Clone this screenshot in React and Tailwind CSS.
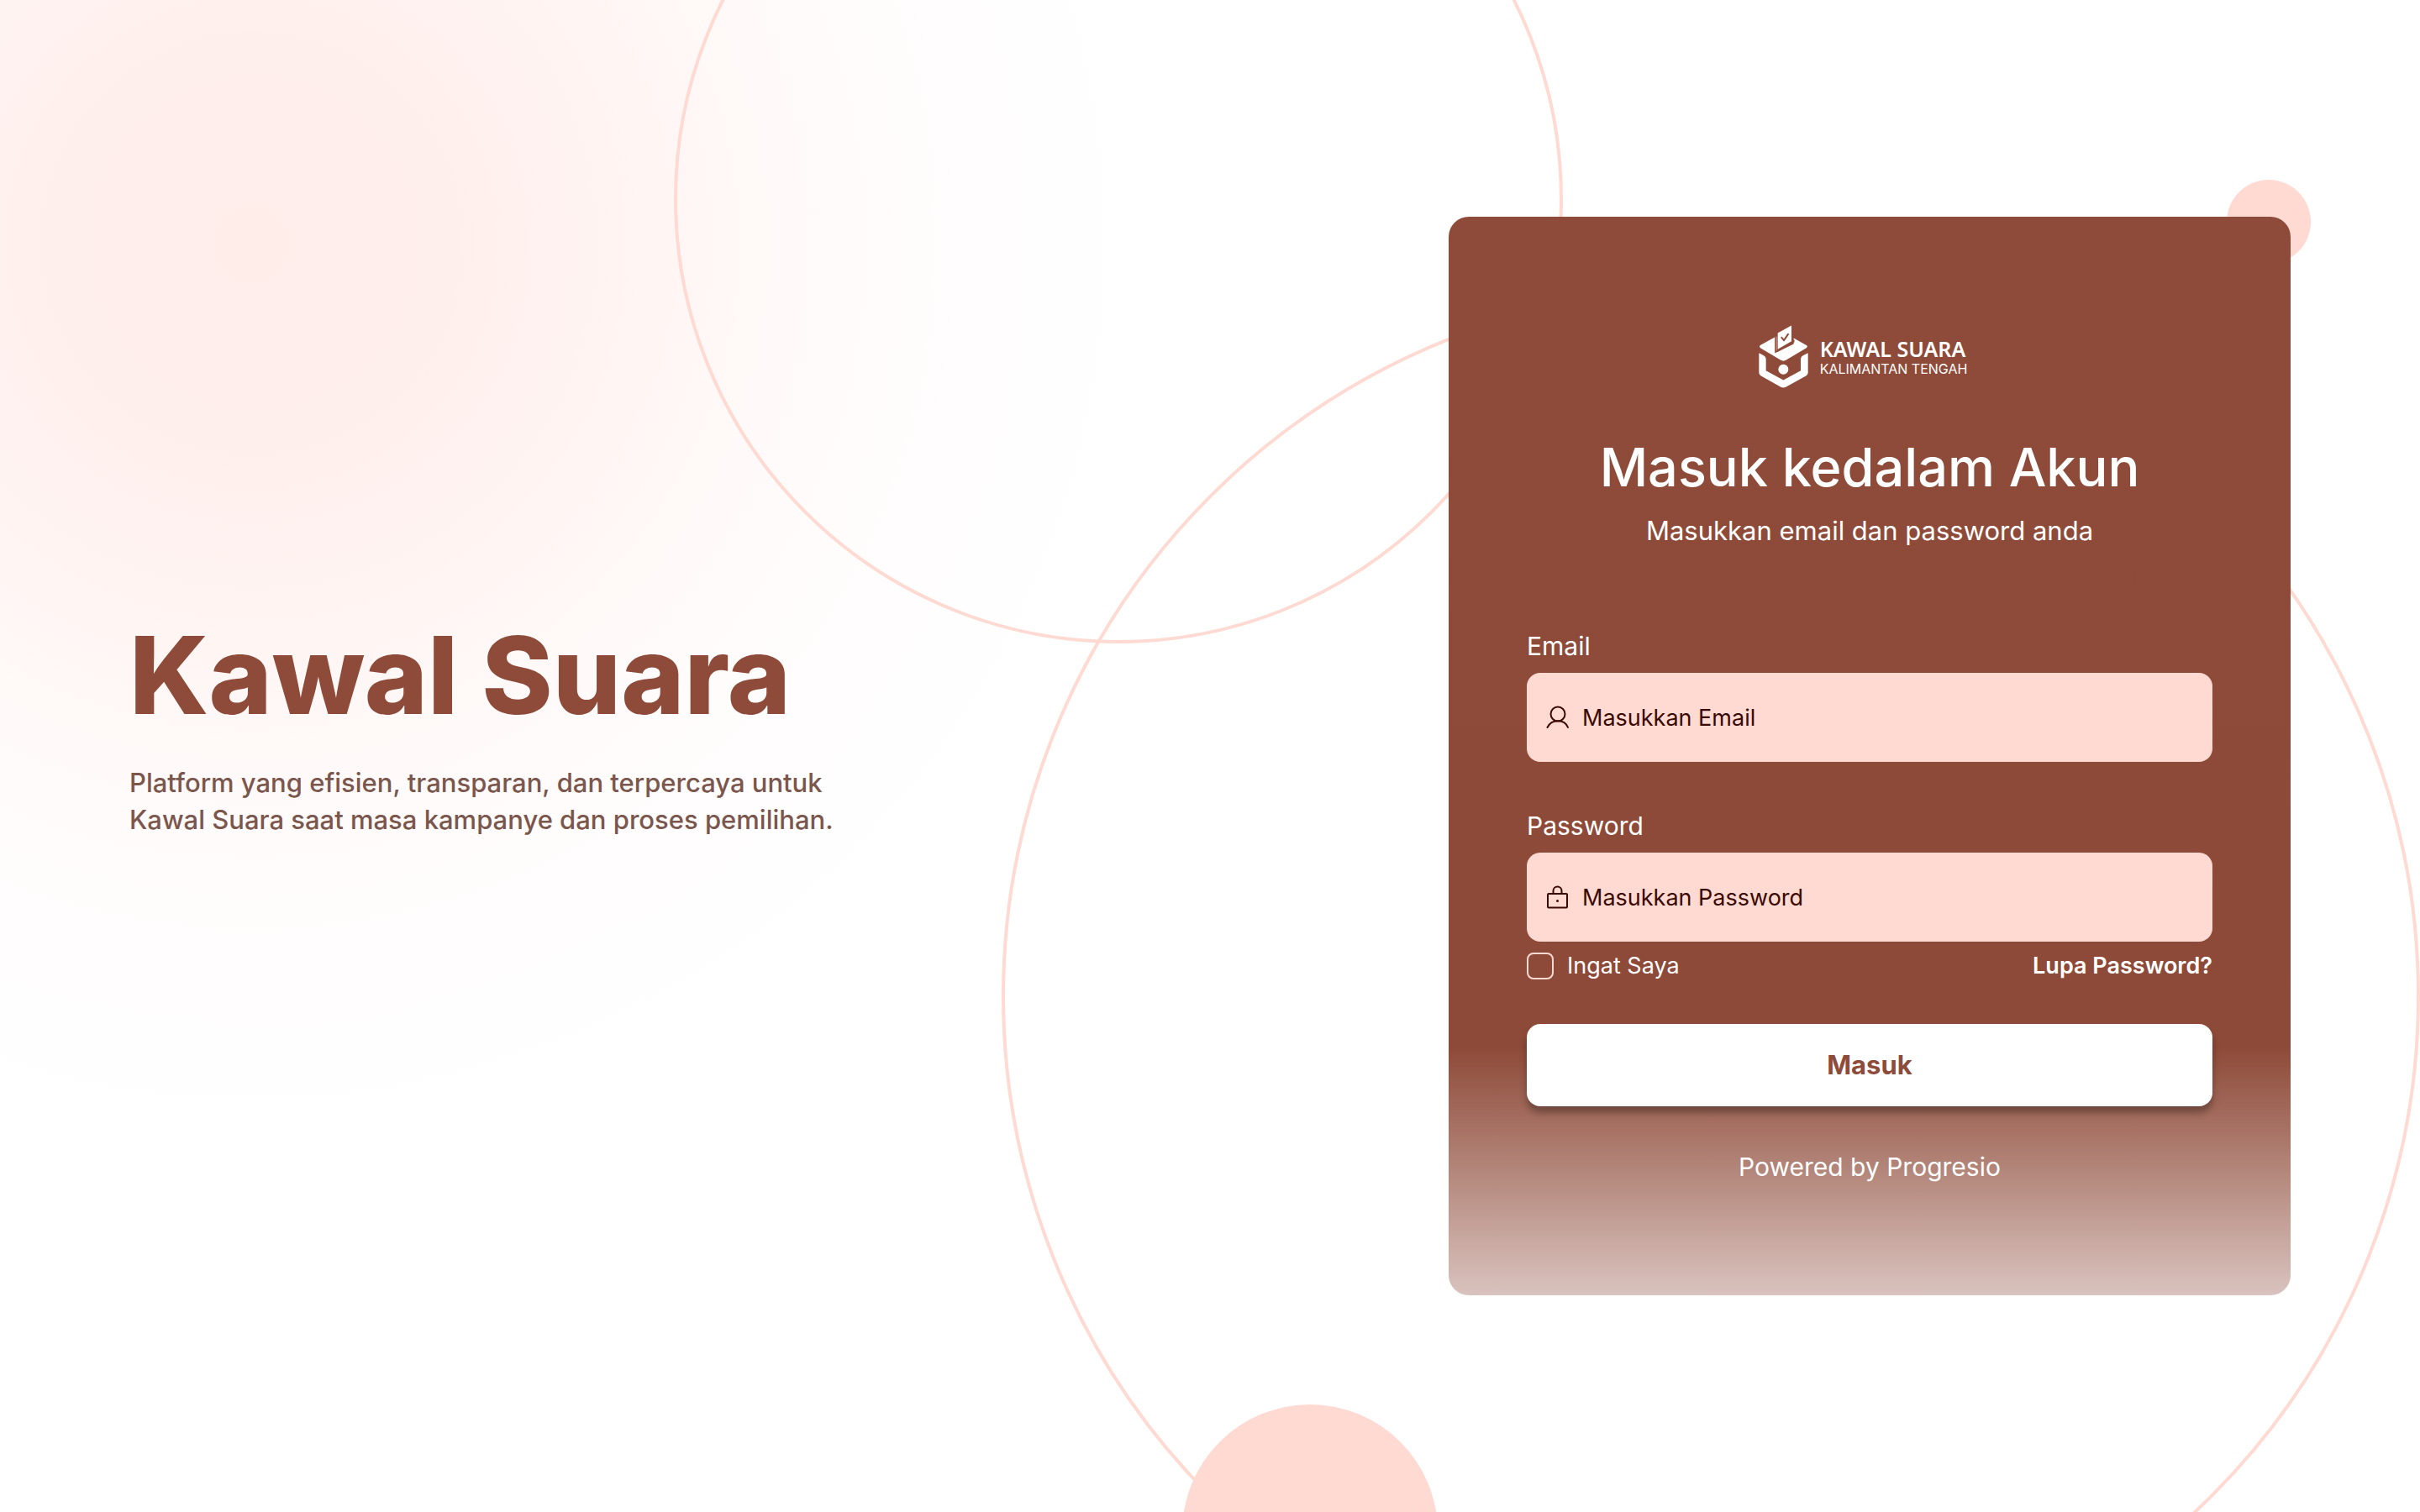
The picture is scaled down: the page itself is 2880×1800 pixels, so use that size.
function Logo() {
  return (
    <div className="flex items-center justify-center gap-[13px] pr-4">
      <svg viewBox="0 0 180 224" className="h-[75px] w-[60px]" aria-hidden="true">
        <path
          d="M61 41 7 71q-8 5 0 11l72 43q9 5 18 0l72-43q9-6 0-11l-44-25v21L64 97V41Z"
          fill="#fff"
        />
        <path d="M68 28 117 1V57L68 86Z" fill="#fff" />
        <path
          d="M60 40v56l7-4 58-33v-7"
          fill="none"
          stroke="#8e4b3a"
          strokeWidth="5"
        />
        <path d="m82 44 8 10 15-22" fill="none" stroke="#8e4b3a" strokeWidth="6" strokeLinecap="round" strokeLinejoin="round" />
        <path
          d="M1 99 18 108Q26 112 26 121V162L88 196 150 162V121Q150 112 158 108L176 99V170Q176 176 170 180L97 221Q88 225 79 221L7 180Q1 176 1 170Z"
          fill="#fff"
        />
        <circle cx="88" cy="158" r="18" fill="#fff" />
      </svg>
      <div className="flex flex-col whitespace-nowrap text-white">
        <span className="font-['Noto_Sans',sans-serif] text-[25px] leading-[28px] font-semibold">KAWAL SUARA</span>
        <span className="text-[16px] leading-[20px]">KALIMANTAN TENGAH</span>
      </div>
    </div>
  );
}

function UserIcon() {
  return (
    <svg viewBox="0 0 28 28" className="size-7 shrink-0" fill="none" stroke="currentColor" strokeWidth="2" strokeLinecap="round" aria-hidden="true">
      <circle cx="15" cy="10" r="8.5" />
      <path d="M2.500 26C5 21 10 18.300 15 18.300S25 21 27 26" />
    </svg>
  );
}

function LockIcon() {
  return (
    <svg viewBox="0 0 28 28" className="size-7 shrink-0" fill="none" stroke="currentColor" strokeWidth="2" aria-hidden="true">
      <rect x="3" y="10" width="23" height="16.500" rx="1" />
      <path d="M9.500 10V6.500a5 5 0 0 1 10 0V10" />
      <circle cx="14.500" cy="18.500" r="1.500" fill="currentColor" stroke="none" />
    </svg>
  );
}

function Field({ id, label, type, placeholder, icon }) {
  return (
    <div className="flex flex-col gap-3">
      <label htmlFor={id} className="text-[30px] leading-[40px] text-white">{label}</label>
      <div className="flex h-[106px] items-center gap-4 rounded-2xl bg-[#ffdad2] pr-6 pl-[22px] text-[#3b0903]">
        {icon}
        <input
          id={id}
          type={type}
          placeholder={placeholder}
          className="h-full min-w-0 flex-1 bg-transparent text-[27px] outline-none placeholder:text-[#3b0903] placeholder:opacity-100"
        />
      </div>
    </div>
  );
}

function Backdrop() {
  return (
    <div className="pointer-events-none absolute inset-0 overflow-hidden" aria-hidden="true">
      <div className="absolute top-[-800px] left-[-790px] size-[2180px] rounded-full bg-[radial-gradient(closest-side,#ffedea_0%,#ffefec_22%,#fff4f2_40%,#fffaf9_58%,#fffdfd_78%,#ffffff_100%)]" />
      <div className="absolute top-[-292px] left-[802px] size-[1058px] rounded-full border-4 border-[#ffdad2]" />
      <div className="absolute top-[342px] left-[1192px] size-[1688px] rounded-full border-4 border-[#ffdad2]" />
      <div className="absolute top-[1672px] left-[1407px] size-[304px] rounded-full bg-[#ffdad2]" />
      <div className="absolute top-[214px] left-[2650px] size-[100px] rounded-full bg-[#ffdad2]" />
    </div>
  );
}

export default function App() {
  return (
    <div className="relative min-h-screen overflow-hidden bg-white font-['Inter',sans-serif]">
      <Backdrop />
      <main className="relative flex min-h-screen items-center justify-between gap-16 px-[154px]">
        <section className="flex flex-col gap-[46px] pb-[58px]">
          <h1 className="text-[128px] leading-[120px] font-extrabold whitespace-nowrap text-[#8e4b3a]">Kawal Suara</h1>
          <p className="text-[31px] leading-[44px] font-medium text-[#7b564d]">
            Platform yang efisien, transparan, dan terpercaya untuk
            <br />
            Kawal Suara saat masa kampanye dan proses pemilihan.
          </p>
        </section>

        <form
          onSubmit={(e) => e.preventDefault()}
          className="flex w-full max-w-[1002px] flex-col rounded-3xl bg-[linear-gradient(180deg,#8e4b3a_0%,#8e4a38_77%,#d9c3be_100%)] px-[93px] pt-[129px] pb-[133px]"
        >
          <Logo />
          <h2 className="mt-[54px] text-center text-[63px] leading-[80px] font-medium text-white">Masuk kedalam Akun</h2>
          <p className="mt-4 text-center text-[31px] leading-[40px] text-white">Masukkan email dan password anda</p>

          <div className="mt-[97px] flex flex-col gap-14">
            <Field id="email" label="Email" type="email" placeholder="Masukkan Email" icon={<UserIcon />} />
            <Field id="password" label="Password" type="password" placeholder="Masukkan Password" icon={<LockIcon />} />
          </div>

          <div className="mt-[13px] flex items-center justify-between text-[27px] leading-[32px] text-white">
            <label className="flex items-center gap-4">
              <input type="checkbox" className="size-8 appearance-none rounded-lg border-2 border-[#ffdad2] checked:bg-[#ffdad2]" />
              Ingat Saya
            </label>
            <a href="#lupa-password" className="font-semibold">Lupa Password?</a>
          </div>

          <button
            type="submit"
            className="mt-[53px] h-[98px] rounded-2xl bg-white text-[31px] font-bold text-[#8e4b3a] shadow-[0_8px_8px_rgba(0,0,0,0.3)]"
          >
            Masuk
          </button>
          <p className="mt-[52px] text-center text-[30px] leading-[40px] text-white">Powered by Progresio</p>
        </form>
      </main>
    </div>
  );
}
